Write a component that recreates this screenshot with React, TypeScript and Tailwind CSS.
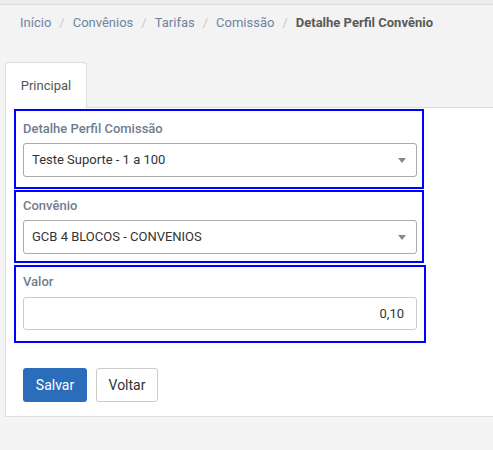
import React from "react";

const crumbs = ["Início", "Convênios", "Tarifas", "Comissão"];

function Caret() {
  return (
    <span className="w-0 h-0 border-l-[4px] border-r-[4px] border-t-[5px] border-l-transparent border-r-transparent border-t-[#888]" />
  );
}

function SelectField({ value }: { value: string }) {
  return (
    <div className="w-[394px] h-[34px] border border-[#aaa] rounded-[3px] bg-white flex items-center justify-between pl-[8px] pr-[10px] text-[13px] text-[#333]">
      <span>{value}</span>
      <Caret />
    </div>
  );
}

export default function App() {
  return (
    <div className="min-h-[450px] bg-[#f4f4f4] font-['Roboto',sans-serif]">
      <div className="h-[5px] bg-[#ededed] border-b border-[#dcdcdc]" />
      <nav className="ml-[5px] h-[36px] pl-[15px] flex items-center bg-[#f3f3f3] text-[13px]">
        {crumbs.map((c) => (
          <React.Fragment key={c}>
            <span className="text-[#7083a0]">{c}</span>
            <span className="text-[#c8c8c8] px-[8px]">/</span>
          </React.Fragment>
        ))}
        <span className="font-bold text-[#5a5a5a]">Detalhe Perfil Convênio</span>
      </nav>

      <div className="mt-[21px] ml-[5px] flex">
        <div className="w-[82px] h-[46px] -mb-px relative bg-white border border-b-0 border-[#ddd] rounded-t-[4px] flex items-center justify-center text-[13px] text-[#555]">
          Principal
        </div>
      </div>

      <div className="ml-[5px] bg-white border-l border-t border-b border-[#ddd] pt-[1px] pl-[8px] pb-[14px]">
        <div className="w-[410px] h-[80px] border-2 border-[#0000ff] pl-[7px] pt-[8px]">
          <div className="text-[13px] font-medium text-[#6f7d8f] leading-[20px] mb-[4px]">Detalhe Perfil Comissão</div>
          <SelectField value="Teste Suporte - 1 a 100" />
        </div>
        <div className="w-[410px] h-[73px] mt-[1px] border-2 border-[#0000ff] pl-[7px] pt-[4px]">
          <div className="text-[13px] font-medium text-[#6f7d8f] leading-[20px] mb-[4px]">Convênio</div>
          <SelectField value="GCB 4 BLOCOS - CONVENIOS" />
        </div>
        <div className="w-[412px] h-[78px] mt-[2px] border-2 border-[#0000ff] pl-[7px] pt-[5px]">
          <div className="text-[13px] font-medium text-[#6f7d8f] leading-[20px] mb-[5px]">Valor</div>
          <div className="w-[394px] h-[33px] border border-[#ccc] rounded-[3px] bg-white flex items-center justify-end pr-[12px] text-[13px] text-[#333]">
            0,10
          </div>
        </div>

        <div className="mt-[25px] ml-[9px] flex gap-[9px]">
          <button className="w-[64px] h-[34px] rounded-[3px] bg-[#2a6ebb] text-white text-[14px]">Salvar</button>
          <button className="w-[62px] h-[34px] rounded-[3px] bg-white border border-[#ccc] text-[#333] text-[14px]">Voltar</button>
        </div>
      </div>
    </div>
  );
}
